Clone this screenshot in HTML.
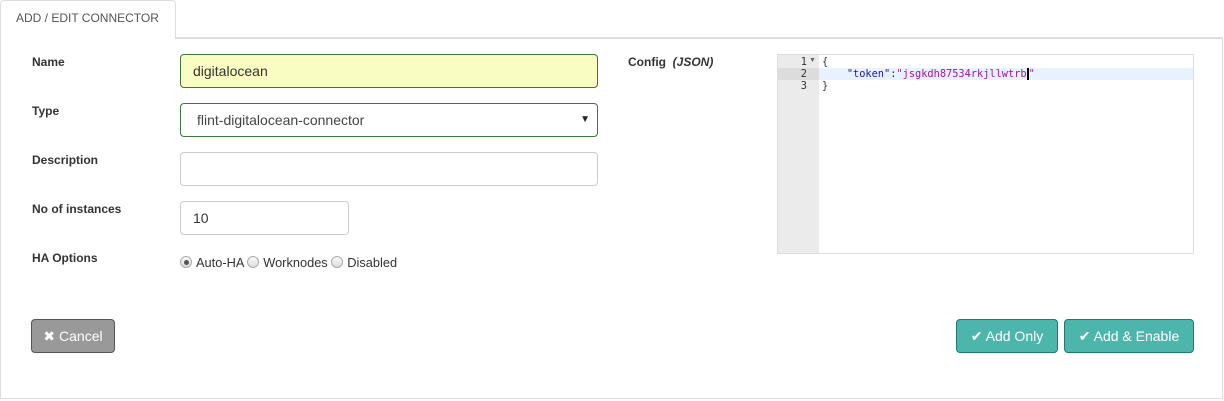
<!DOCTYPE html>
<html><head><style>
*{box-sizing:border-box;margin:0;padding:0}
body{width:1224px;height:401px;background:#fff;font-family:"Liberation Sans",sans-serif;color:#333;position:relative;overflow:hidden}
.a{position:absolute}
.lbl{font-size:12px;font-weight:bold;color:#333}
.inp{position:absolute;border:1px solid #ccc;border-radius:4px;height:34px;font-size:14px;padding:0 12px;line-height:32px;background:#fff}
.btn{position:absolute;height:34px;border-radius:4px;font-size:14px;color:#fff;line-height:32px;text-align:center}
.rad{display:inline-block;width:12px;height:12px;border-radius:50%;border:1px solid #aaa;background:linear-gradient(#fafafa,#ddd);vertical-align:-1px;margin-right:4px;position:relative}
.mono{font-family:"DejaVu Sans Mono","Liberation Mono",monospace;font-size:10.3px;line-height:12px}
</style></head><body>
<div class="a" style="left:0;top:37px;width:1223px;height:362px;border:1px solid #ddd;border-top:2px solid #ddd"></div>
<div class="a" style="left:0;top:0;width:176px;height:39px;border:1px solid #ddd;border-bottom:none;border-radius:4px 4px 0 0;background:#fff;font-size:12px;color:#555;line-height:35px;padding-left:15px">ADD / EDIT CONNECTOR</div>

<div class="a lbl" style="left:32px;top:55px">Name</div>
<div class="a lbl" style="left:32px;top:104px">Type</div>
<div class="a lbl" style="left:32px;top:153px">Description</div>
<div class="a lbl" style="left:32px;top:202px">No of instances</div>
<div class="a lbl" style="left:32px;top:251px">HA Options</div>

<div class="inp" style="left:180px;top:54px;width:418px;background:#fafdc1;border-color:#3c763d">digitalocean</div>
<div class="inp" style="left:180px;top:103px;width:418px;border-color:#3c763d;padding-left:16px;color:#444">flint-digitalocean-connector<span style="position:absolute;right:7px;top:0;font-size:10px;color:#222">▼</span></div>
<div class="inp" style="left:180px;top:152px;width:418px"></div>
<div class="inp" style="left:180px;top:201px;width:169px">10</div>
<div class="a" style="left:180px;top:255px;font-size:12.8px;color:#333"><span class="rad"><span style="position:absolute;left:3px;top:3px;width:5px;height:5px;border-radius:50%;background:#555"></span></span>Auto-HA <span class="rad"></span>Worknodes <span class="rad"></span>Disabled</div>

<div class="a lbl" style="left:628px;top:55px">Config &nbsp;<i>(JSON)</i></div>
<div class="a" style="left:777px;top:54px;width:417px;height:200px;border:1px solid #ddd;background:#fff">
 <div class="a" style="left:0;top:0;width:41px;height:198px;background:#ebebeb"></div>
 <div class="a" style="left:0;top:13px;width:41px;height:12px;background:#dcdcdc"></div>
 <div class="a" style="left:41px;top:13px;width:374px;height:12px;background:#e8f2fe"></div>
 <div class="a mono" style="left:0;top:1px;width:29px;text-align:right;color:#333">1<br>2<br>3</div>
 <div class="a" style="left:31px;top:2px;font-size:7px;color:#666">▼</div>
 <div class="a mono" style="left:44px;top:1px;color:#333;white-space:pre">{
    <span style="color:#1a1aa6">"token"</span>:<span style="color:#a0149c">"jsgkdh87534rkjllwtrb</span><span style="border-left:2px solid #000"></span><span style="color:#a0149c">"</span>
}</div>
</div>

<div class="btn" style="left:31px;top:319px;width:84px;background:#999;border:1px solid #555">✖ Cancel</div>
<div class="btn" style="left:956px;top:319px;width:102px;background:#4db6ac;border:1px solid #1d7a6e">✔ Add Only</div>
<div class="btn" style="left:1064px;top:319px;width:130px;background:#4db6ac;border:1px solid #1d7a6e">✔ Add &amp; Enable</div>
</body></html>
